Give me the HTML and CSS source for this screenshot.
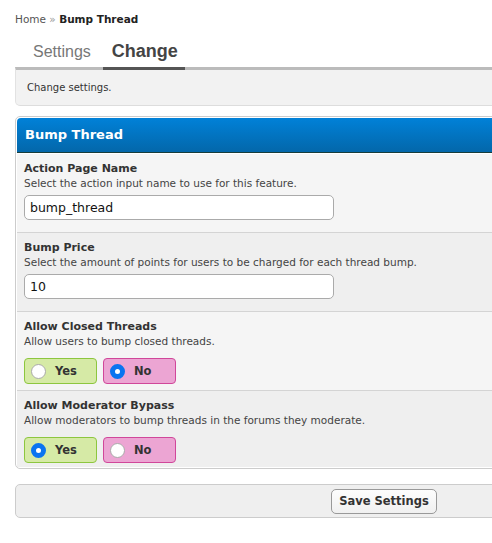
FILE: index.html
```html
<!DOCTYPE html>
<html>
<head>
<meta charset="utf-8">
<link rel="stylesheet" href="styles.css">
</head>
<body>
<div class="page">
  <div class="breadcrumb">Home <span class="sep">»</span> <b>Bump Thread</b></div>
  <div class="tabs">
    <span class="tab">Settings</span>
    <span class="tab active">Change</span>
  </div>
  <div class="tabbox">Change settings.</div>

  <div class="form">
    <div class="form-head">Bump Thread</div>
    <div class="row alt1">
      <div class="label">Action Page Name</div>
      <div class="desc">Select the action input name to use for this feature.</div>
      <input class="text" type="text" value="bump_thread">
    </div>
    <div class="row alt2">
      <div class="label">Bump Price</div>
      <div class="desc">Select the amount of points for users to be charged for each thread bump.</div>
      <input class="text" type="text" value="10">
    </div>
    <div class="row alt1">
      <div class="label">Allow Closed Threads</div>
      <div class="desc">Allow users to bump closed threads.</div>
      <div class="choices">
        <label class="choice yes"><span class="radio"></span>Yes</label>
        <label class="choice no"><span class="radio on"></span>No</label>
      </div>
    </div>
    <div class="row alt2 last">
      <div class="label">Allow Moderator Bypass</div>
      <div class="desc">Allow moderators to bump threads in the forums they moderate.</div>
      <div class="choices">
        <label class="choice yes"><span class="radio on"></span>Yes</label>
        <label class="choice no"><span class="radio"></span>No</label>
      </div>
    </div>
  </div>

  <div class="submit">
    <button class="btn">Save Settings</button>
  </div>
</div>
</body>
</html>
```

FILE: styles.css
```css
html { overflow: hidden; }
body {
  margin: 0;
  background: #fff;
  font-family: "DejaVu Sans", Verdana, sans-serif;
  font-size: 11px;
  color: #333;
}
.page {
  width: 738px;
  padding: 12px 0 0 15px;
}
.breadcrumb {
  font-size: 10.5px;
  color: #555;
  line-height: 14px;
}
.breadcrumb b { color: #222; }
.breadcrumb .sep { color: #999; }
.tabs {
  display: flex;
  padding-left: 3px;
  margin-top: 13px;
  height: 28px;
  font-family: "Liberation Sans", Arial, sans-serif;
  font-size: 16px;
}
.tab {
  padding: 4px 12px 0 15px;
  color: #777;
}
.tab.active {
  font-weight: bold;
  color: #444;
  font-size: 18px;
  padding: 2px 7px 0 9px;
  border-bottom: 3px solid #555;
  margin-bottom: -3px;
  position: relative;
  z-index: 1;
  height: 26px;
}
.tabbox {
  border-top: 3px solid #bbb;
  background: #f2f2f2;
  border-bottom: 1px solid #ddd;
  border-left: 1px solid #e2e2e2;
  border-radius: 0 0 0 5px;
  padding: 10px 11px;
  font-size: 10px;
  line-height: 15px;
}
.form {
  margin-top: 10px;
  border: 1px solid #ccc;
  border-radius: 5px;
  overflow: hidden;
  background: #fff;
}
.form-head {
  margin: 1px;
  background: linear-gradient(#0181d8, #0367aa);
  color: #fff;
  font-weight: bold;
  font-size: 13px;
  padding: 9px 8px;
  line-height: 16px;
  border-bottom: 1px solid #183d3a;
  border-radius: 4px 4px 0 0;
}
.row {
  padding: 7px 7px 6px;
  border-bottom: 1px solid #d4d4d4;
  margin: 0 1px;
}
.row.last { border-bottom: 0; margin-bottom: 1px; padding-bottom: 4px; }
.alt1 { background: #f5f5f5; }
.alt2 { background: #efefef; }
.label {
  font-weight: bold;
  font-size: 11px;
  line-height: 15px;
  color: #333;
}
.desc {
  font-size: 10.5px;
  color: #444;
  line-height: 14px;
}
.text {
  display: block;
  margin: 5px 0 6px;
  width: 310px;
  height: 25px;
  box-sizing: border-box;
  border: 1px solid #aaa;
  border-radius: 5px;
  background: #fff;
  font-family: "DejaVu Sans", Verdana, sans-serif;
  font-size: 12.5px;
  padding: 0 5px;
  color: #111;
}
.choices {
  display: flex;
  gap: 6px;
  margin-top: 10px;
}
.choice {
  display: flex;
  align-items: center;
  width: 73px;
  height: 26px;
  box-sizing: border-box;
  border: 1px solid;
  border-radius: 4px;
  padding-left: 6px;
  font-weight: bold;
  font-size: 11.5px;
  color: #333;
}
.choice.yes { background: #d6eaa6; border-color: #8dc63f; }
.choice.no { background: #eca5d3; border-color: #d0479a; }
.radio {
  width: 13px;
  height: 13px;
  border-radius: 50%;
  background: #fff;
  border: 1px solid #aaa;
  margin-right: 9px;
  box-sizing: content-box;
}
.radio.on {
  width: 5px;
  height: 5px;
  border: 5px solid #0a74f0;
}
.submit {
  margin-top: 15px;
  background: #efefef;
  border: 1px solid #ccc;
  border-radius: 5px;
  height: 32px;
  display: flex;
  align-items: center;
  justify-content: center;
}
.btn {
  font-family: "DejaVu Sans", Verdana, sans-serif;
  font-weight: bold;
  font-size: 11.5px;
  color: #333;
  background: linear-gradient(#fdfdfd, #f0f0f0);
  border: 1px solid #999;
  border-radius: 5px;
  height: 25px;
  padding: 0 7px;
}
```
